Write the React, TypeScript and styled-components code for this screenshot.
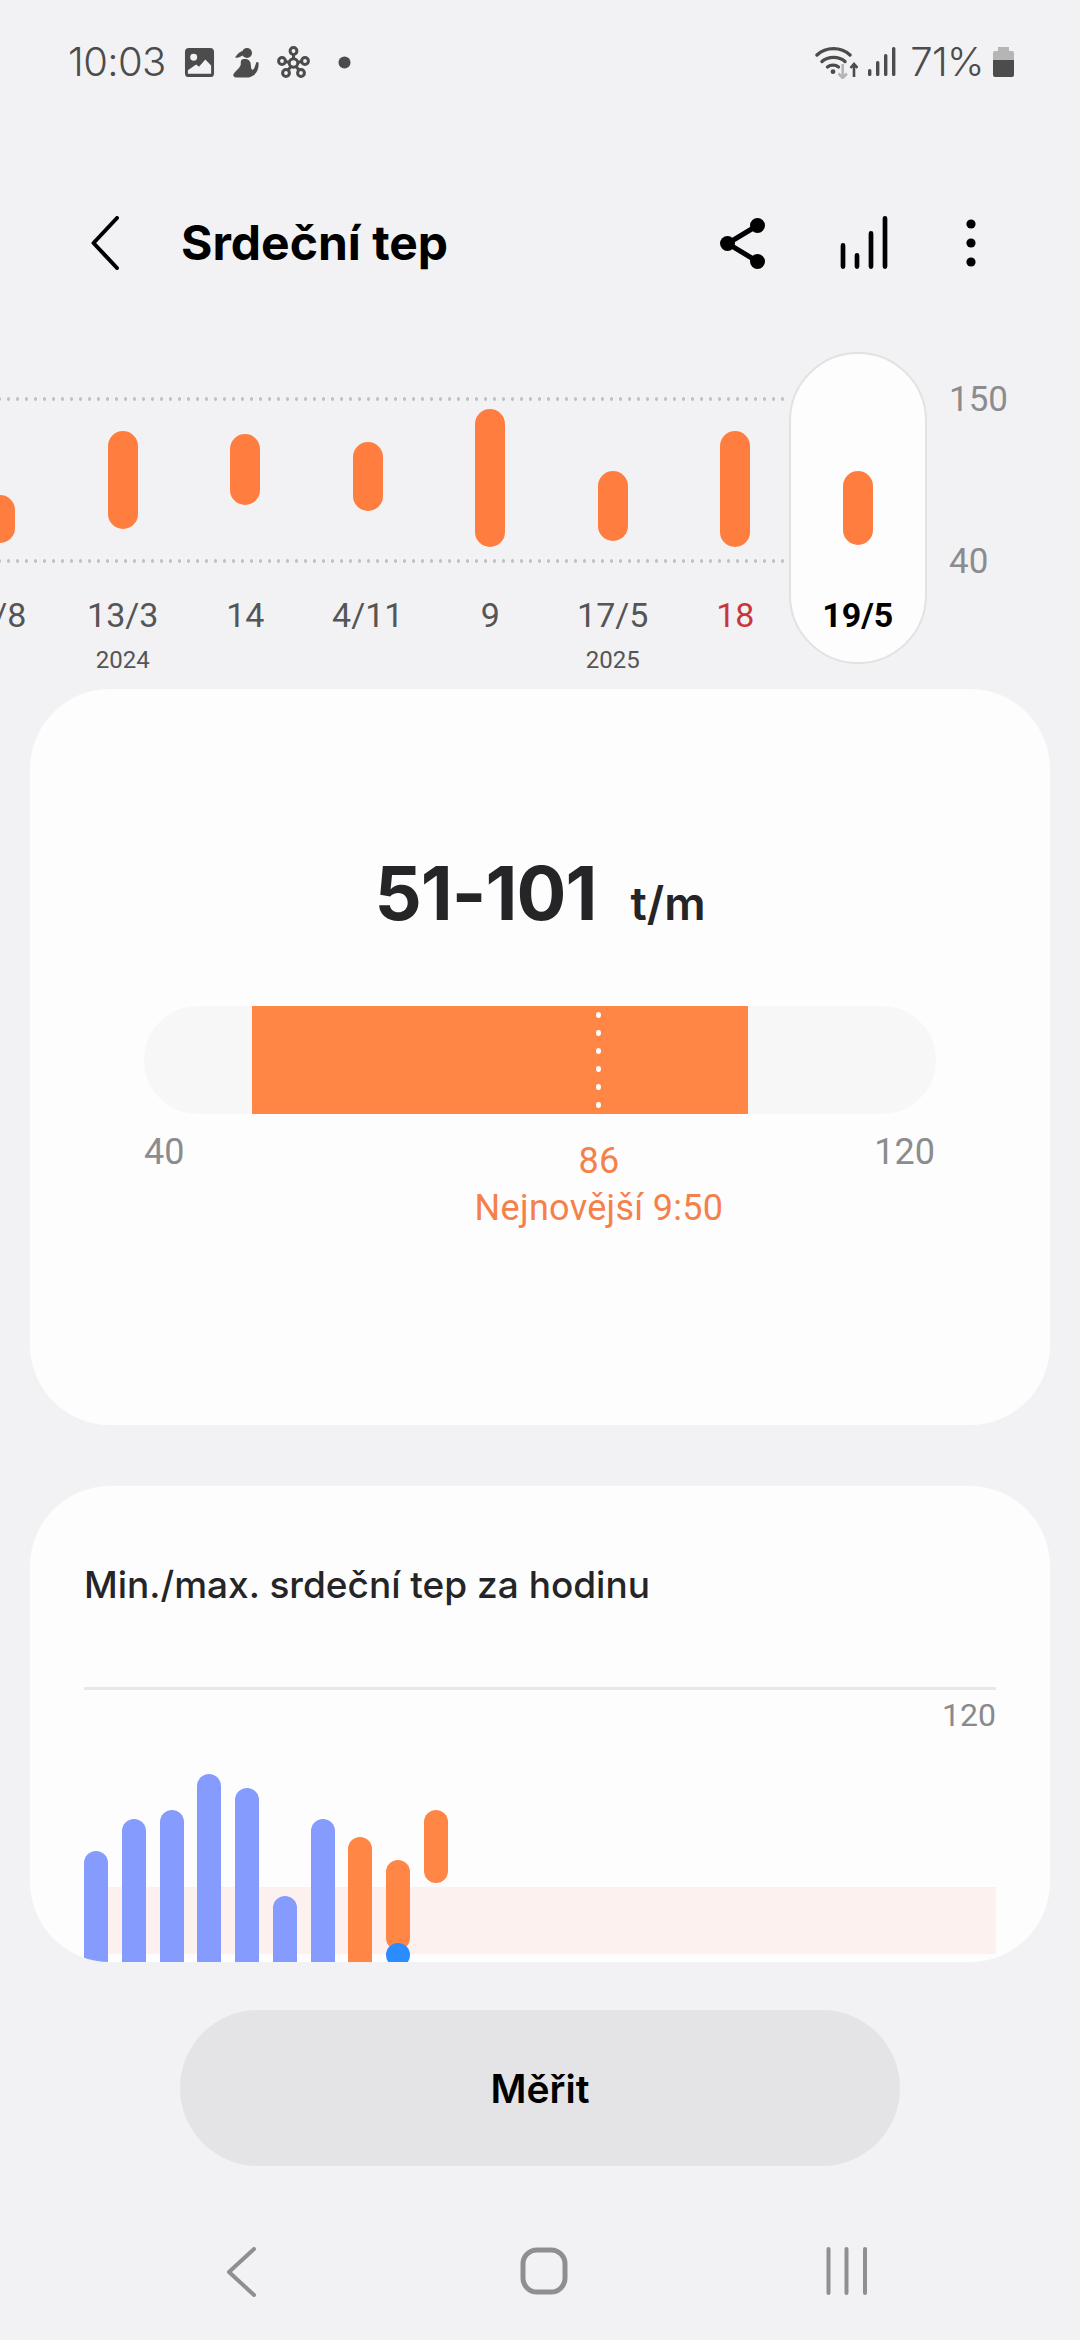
import React from "react";
import styled, { createGlobalStyle } from "styled-components";

const GlobalStyle = createGlobalStyle`
  html, body {
    margin: 0;
    padding: 0;
    background: #f2f2f4;
    font-family: Roboto, "Noto Sans", sans-serif;
  }
`;

const Page = styled.div`
  width: 1080px;
  height: 2340px;
  overflow: hidden;
  display: flex;
  flex-direction: column;
  background: #f2f2f4;
`;

/* status bar */
const StatusBar = styled.div`
  height: 124px;
  box-sizing: border-box;
  padding: 0 66px 0 68px;
  display: flex;
  align-items: center;
  justify-content: space-between;
  color: #4c4c4c;
  flex-shrink: 0;
`;

const StatusGroup = styled.div`
  display: flex;
  align-items: center;
`;

const StatusText = styled.span<{ $gap?: number }>`
  margin-left: ${(p) => p.$gap || 0}px;
  font-family: Inter, Roboto, sans-serif;
  font-size: 40px;
  font-weight: 300;
  line-height: 44px;
  letter-spacing: -0.6px;
`;

const StatusIcon = styled.svg<{ $gap: number }>`
  display: block;
  margin-left: ${(p) => p.$gap}px;
  fill: #4c4c4c;
`;

/* header */
const Header = styled.div`
  height: 228px;
  box-sizing: border-box;
  padding: 92px 0 0 91px;
  display: flex;
  align-items: flex-start;
  flex-shrink: 0;
`;

const BackIcon = styled.svg`
  display: block;
  flex-shrink: 0;
`;

const HeaderTitle = styled.h1`
  margin: 0 0 0 62px;
  font-family: Inter, Roboto, sans-serif;
  font-size: 48px;
  line-height: 54px;
  font-weight: 700;
  color: #000;
  letter-spacing: 0;
  flex: 1;
`;

const HeaderIcon = styled.svg<{ $right: number; $top?: number }>`
  display: block;
  margin-right: ${(p) => p.$right}px;
  margin-top: ${(p) => p.$top || 0}px;
`;

/* trend strip */
const Trend = styled.div`
  height: 312px;
  display: flex;
  flex-shrink: 0;
`;

const TrendColumns = styled.div`
  position: relative;
  display: flex;
  margin-left: -61px;
  flex-shrink: 0;
`;

const Guide = styled.div<{ $top: number }>`
  position: absolute;
  left: 0;
  width: 848px;
  top: ${(p) => p.$top}px;
  height: 4px;
  background-image: radial-gradient(circle at 4.5px 2px, #c2c2c4 1.5px, transparent 2px);
  background-size: 9px 4px;
  background-position: right top;
`;

const TrendColumn = styled.div<{ $selected?: boolean }>`
  position: relative;
  width: 122.5px;
  height: 312px;
  display: flex;
  flex-direction: column;
  align-items: center;

  ${(p) =>
    p.$selected &&
    `
    &::before {
      content: "";
      position: absolute;
      top: 0;
      bottom: 0;
      left: -8px;
      right: -8px;
      box-sizing: border-box;
      background: #fdfdfd;
      border: 2px solid #e2e2e3;
      border-radius: 69px;
    }
  `}
`;

const Plot = styled.div`
  position: relative;
  height: 228px;
  flex-shrink: 0;
`;

const RangeBar = styled.div<{ $top: number; $height: number }>`
  width: 30px;
  height: ${(p) => p.$height}px;
  margin-top: ${(p) => p.$top}px;
  border-radius: 15px;
  background: #ff7d3f;
`;

const DateLabel = styled.div<{ $tone?: "sun" | "selected" }>`
  position: relative;
  height: 44px;
  margin-top: 13px;
  font-size: 34px;
  line-height: 44px;
  white-space: nowrap;
  font-weight: ${(p) => (p.$tone === "selected" ? 700 : 400)};
  color: ${(p) =>
    p.$tone === "selected" ? "#000" : p.$tone === "sun" ? "#c8383a" : "#555557"};
`;

const YearLabel = styled.div`
  font-size: 24px;
  line-height: 30px;
  margin-top: 8px;
  color: #555557;
`;

const Axis = styled.div`
  margin-left: 30px;
  padding-top: 28px;
  display: flex;
  flex-direction: column;
  gap: 122px;
`;

const AxisLabel = styled.div`
  font-size: 35px;
  line-height: 40px;
  color: #8c8c8e;
`;

/* cards */
const Card = styled.div<{ $height: number; $top: number }>`
  flex-shrink: 0;
  margin: ${(p) => p.$top}px 30px 0;
  height: ${(p) => p.$height}px;
  background: #fdfdfe;
  border-radius: 80px;
  overflow: hidden;
  position: relative;
`;

const RangeValue = styled.div`
  padding-top: 164px;
  display: flex;
  justify-content: center;
  align-items: baseline;
  color: #252528;
  height: 77px;
  font-family: Inter, Roboto, sans-serif;
`;

const ValueNumber = styled.span`
  font-size: 74px;
  line-height: 80px;
  font-weight: 700;
  letter-spacing: -0.9px;
`;

const ValueUnit = styled.span`
  margin-left: 34px;
  font-size: 46px;
  line-height: 80px;
  font-weight: 600;
`;

const Track = styled.div`
  position: relative;
  height: 108px;
  margin: 76px 114px 0;
  background: #f7f7f8;
  border-radius: 54px;
`;

const TrackFill = styled.div`
  position: absolute;
  top: 0;
  bottom: 0;
  left: 108px;
  width: 496px;
  background: #ff8645;
`;

const LatestMark = styled.div`
  position: absolute;
  left: 452px;
  top: 6px;
  display: flex;
  flex-direction: column;
  gap: 12px;
`;

const LatestDot = styled.span`
  width: 5px;
  height: 6px;
  border-radius: 50%;
  background: #fff;
`;

const ScaleRow = styled.div`
  position: relative;
  display: flex;
  justify-content: space-between;
  margin: 18px 115px 0 114px;
  font-size: 36px;
  line-height: 40px;
  color: #8c8c8e;
`;

const Latest = styled.div`
  position: absolute;
  top: 9px;
  left: 310px;
  width: 290px;
  text-align: center;
  color: #f5814a;
  font-size: 36px;
  letter-spacing: 0.3px;
`;

const LatestValue = styled.div`
  line-height: 40px;
`;

const LatestTime = styled.div`
  line-height: 40px;
  margin-top: 7px;
`;

const CardTitle = styled.div`
  padding: 77px 54px 0;
  font-family: Inter, Roboto, sans-serif;
  font-size: 37px;
  line-height: 44px;
  font-weight: 500;
  color: #252528;
`;

const HourChart = styled.div`
  position: relative;
  margin: 80px 54px 0;
  border-top: 3px solid #e8e8e9;
`;

const ChartMax = styled.div`
  text-align: right;
  font-size: 32px;
  line-height: 40px;
  margin-top: 5px;
  color: #8a8a8c;
`;

const HourBand = styled.div`
  position: absolute;
  left: 0;
  right: 0;
  top: 197px;
  height: 67px;
  background: #fdf1f0;
`;

const HourBars = styled.div`
  position: absolute;
  top: 0;
  left: 0;
  height: 280px;
  display: flex;
  gap: 13.75px;
`;

const HourBar = styled.div<{ $top: number; $height: number; $tone: "low" | "high" }>`
  width: 24px;
  height: ${(p) => p.$height}px;
  margin-top: ${(p) => p.$top}px;
  border-radius: 12px;
  position: relative;
  background: ${(p) => (p.$tone === "low" ? "#859bfd" : "#ff8645")};
`;

const NowDot = styled.span`
  position: absolute;
  left: 0;
  bottom: -17px;
  width: 24px;
  height: 24px;
  border-radius: 50%;
  background: #2b8cff;
`;

/* measure button */
const MeasureButton = styled.button`
  flex-shrink: 0;
  display: block;
  width: 720px;
  height: 156px;
  margin: 48px auto 0;
  border: 0;
  border-radius: 78px;
  background: #e4e4e6;
  color: #000;
  font-family: Inter, Roboto, sans-serif;
  font-size: 39px;
  font-weight: 600;
`;

/* navigation bar */
const NavBar = styled.div`
  display: flex;
  align-items: flex-start;
  padding: 81px 0 0 226px;
  flex-shrink: 0;
`;

const NavIcon = styled.svg<{ $left?: number }>`
  display: block;
  margin-left: ${(p) => p.$left || 0}px;
  fill: none;
  stroke: #8f8f8f;
  stroke-linecap: round;
  stroke-linejoin: round;
`;

const days = [
  { label: "5/8", top: 96, height: 48 },
  { label: "13/3", year: "2024", top: 32, height: 98 },
  { label: "14", top: 35, height: 71 },
  { label: "4/11", top: 43, height: 69 },
  { label: "9", top: 10, height: 138 },
  { label: "17/5", year: "2025", top: 72, height: 70 },
  { label: "18", top: 32, height: 116, tone: "sun" as const },
  { label: "19/5", top: 72, height: 74, tone: "selected" as const },
];

const hours = [
  { top: 161, height: 130, tone: "low" as const },
  { top: 129, height: 160, tone: "low" as const },
  { top: 120, height: 170, tone: "low" as const },
  { top: 84, height: 210, tone: "low" as const },
  { top: 98, height: 200, tone: "low" as const },
  { top: 206, height: 90, tone: "low" as const },
  { top: 129, height: 170, tone: "low" as const },
  { top: 147, height: 150, tone: "high" as const },
  { top: 170, height: 90, tone: "high" as const, now: true },
  { top: 120, height: 73, tone: "high" as const },
];

const App: React.FC = () => {
  return (
    <Page>
      <GlobalStyle />
      <StatusBar>
        <StatusGroup>
          <StatusText>10:03</StatusText>
          <StatusIcon $gap={18} width="31" height="31" viewBox="0 0 32 32">
            <path
              fillRule="evenodd"
              d="M5 1h22a4 4 0 0 1 4 4v22a4 4 0 0 1-4 4H5a4 4 0 0 1-4-4V5a4 4 0 0 1 4-4zM10 7a3.600 3.600 0 1 0 0 7.200A3.600 3.600 0 0 0 10 7zM4 27.500h24v-8.500l-6-6-6.500 7.500-3-2.500L4 24z"
            />
          </StatusIcon>
          <StatusIcon $gap={18} width="26" height="31" viewBox="0 0 26 31">
            <circle cx="14" cy="6" r="5" />
            <path d="M11 3.500C8 4 5 6 2 10.500c3 .5 6-.5 9-3z" />
            <path d="M9 12.500c3-1 6-.5 7.500 1.500 2 2.600 1 6 2 8 .8 1.500 2.500.5 3-1.500l2-5.500 2 .5c.5 5-1 11-6 13.500-1.500.8-3 1.500-5 1.500H3c-2 0-3.200-1.500-2.500-3.500C2 24 6 22 7.500 18.500c.8-2-.5-4.500 1.500-6z" />
          </StatusIcon>
          <StatusIcon $gap={17} width="35" height="33" viewBox="0 0 35 33" fill="none">
            <g fill="none" stroke="#4c4c4c" strokeWidth="3">
              <circle cx="17.500" cy="5" r="3.400" />
              <circle cx="6" cy="15" r="3.400" />
              <circle cx="29" cy="15" r="3.400" />
              <circle cx="10" cy="27" r="3.400" />
              <circle cx="25" cy="27" r="3.400" />
              <circle cx="17.500" cy="17" r="4.300" />
              <path d="M17.500 8.500V12.500M9.500 15.500l4 1M25.500 15.500l-4 1M12 24l3-3.500M23 24l-3-3.500" />
            </g>
          </StatusIcon>
          <StatusIcon $gap={27} width="13" height="13" viewBox="0 0 14 14">
            <circle cx="7" cy="7" r="6.500" />
          </StatusIcon>
        </StatusGroup>
        <StatusGroup>
          <StatusIcon $gap={0} width="43" height="33" viewBox="0 0 43 33" fill="none">
            <g fill="none" stroke="#4c4c4c" strokeWidth="3.400" strokeLinecap="round">
              <path d="M2 9C11 .5 26 .5 35 9" />
              <path d="M7 15.500c6-5.500 17-5.500 23 0" />
              <path d="M12.500 21c3-2.500 8-2.500 11 0" />
            </g>
            <circle cx="18" cy="25.700" r="2.400" fill="#4c4c4c" />
            <path d="M27.700 18v14M23.500 27.500l4.200 4.500 4.200-4.500" fill="none" stroke="#b5b5b5" strokeWidth="2.600" />
            <path d="M39 31V18M35.500 22l3.500-4 3.500 4" fill="none" stroke="#4c4c4c" strokeWidth="2.600" />
          </StatusIcon>
          <StatusIcon $gap={10} width="28" height="30" viewBox="0 0 28 30">
            <rect x="0" y="22" width="3.400" height="7" rx="1.500" />
            <rect x="8" y="14" width="3.400" height="15" rx="1.500" />
            <rect x="16" y="7" width="3.400" height="22" rx="1.500" />
            <rect x="24" y="0" width="3.400" height="29" rx="1.500" />
          </StatusIcon>
          <StatusText $gap={14}>71%</StatusText>
          <StatusIcon $gap={9} width="21" height="32" viewBox="0 0 21 32">
            <path d="M5 1h11v4h3a2 2 0 0 1 2 2v7H0V7a2 2 0 0 1 2-2h3z" fill="#b5b5b5" />
            <path d="M0 14h21v15a2 2 0 0 1-2 2H2a2 2 0 0 1-2-2z" />
          </StatusIcon>
        </StatusGroup>
      </StatusBar>

      <Header>
        <BackIcon width="28" height="54" viewBox="0 0 28 54" fill="none">
          <path d="M26 2L2.500 27 26 52" stroke="#000" strokeWidth="4" strokeLinecap="round" strokeLinejoin="round" />
        </BackIcon>
        <HeaderTitle>Srdeční tep</HeaderTitle>
        <HeaderIcon $right={75} $top={2} width="45" height="51" viewBox="0 0 45 51">
          <path d="M37.500 7.500l-30 18 30 18" fill="none" stroke="#000" strokeWidth="5" />
          <circle cx="37.500" cy="7.500" r="7.500" />
          <circle cx="7.500" cy="25.500" r="7.500" />
          <circle cx="37.500" cy="43.500" r="7.500" />
        </HeaderIcon>
        <HeaderIcon $right={78} width="48" height="54" viewBox="0 0 48 54">
          <path d="M3 29.400V50.600M17 39.400V50.600M31 17.400V50.600M45 2.400V50.600" fill="none" stroke="#000" strokeWidth="4.700" strokeLinecap="round" />
        </HeaderIcon>
        <HeaderIcon $right={104} width="10" height="54" viewBox="0 0 10 54">
          <circle cx="5" cy="8" r="4.600" />
          <circle cx="5" cy="27" r="4.600" />
          <circle cx="5" cy="46" r="4.600" />
        </HeaderIcon>
      </Header>

      <Trend>
        <TrendColumns>
          <Guide $top={45} />
          <Guide $top={207} />
          {days.map((d) => (
            <TrendColumn key={d.label} $selected={d.tone === "selected"}>
              <Plot>
                <RangeBar $top={d.top + 47} $height={d.height} />
              </Plot>
              <DateLabel $tone={d.tone}>{d.label}</DateLabel>
              {d.year && <YearLabel>{d.year}</YearLabel>}
            </TrendColumn>
          ))}
        </TrendColumns>
        <Axis>
          <AxisLabel>150</AxisLabel>
          <AxisLabel>40</AxisLabel>
        </Axis>
      </Trend>

      <Card $top={25} $height={736}>
        <RangeValue>
          <ValueNumber>51-101</ValueNumber>
          <ValueUnit>t/m</ValueUnit>
        </RangeValue>
        <Track>
          <TrackFill />
          <LatestMark>
            {[0, 1, 2, 3, 4, 5].map((i) => (
              <LatestDot key={i} />
            ))}
          </LatestMark>
        </Track>
        <ScaleRow>
          <span>40</span>
          <span>120</span>
          <Latest>
            <LatestValue>86</LatestValue>
            <LatestTime>Nejnovější 9:50</LatestTime>
          </Latest>
        </ScaleRow>
      </Card>

      <Card $top={61} $height={476}>
        <CardTitle>Min./max. srdeční tep za hodinu</CardTitle>
        <HourChart>
          <ChartMax>120</ChartMax>
          <HourBand />
          <HourBars>
            {hours.map((h, i) => (
              <HourBar key={i} $top={h.top} $height={h.height} $tone={h.tone}>
                {h.now && <NowDot />}
              </HourBar>
            ))}
          </HourBars>
        </HourChart>
      </Card>

      <MeasureButton>Měřit</MeasureButton>

      <NavBar>
        <NavIcon width="30" height="50" viewBox="0 0 30 50" strokeWidth="4">
          <path d="M28 2L3 25l25 23" />
        </NavIcon>
        <NavIcon $left={264} width="48" height="48" viewBox="0 0 48 48" strokeWidth="5">
          <rect x="3" y="3" width="42" height="42" rx="14" />
        </NavIcon>
        <NavIcon $left={258} width="42" height="48" viewBox="0 0 42 48" strokeWidth="4">
          <path d="M2.500 2v44M20.500 2v44M39 2v44" />
        </NavIcon>
      </NavBar>
    </Page>
  );
};

export default App;
